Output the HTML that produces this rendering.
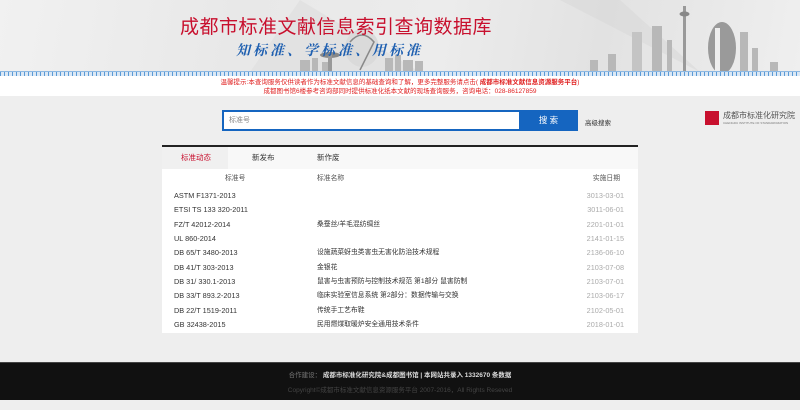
<!DOCTYPE html>
<html><head><meta charset="utf-8"><style>
*{margin:0;padding:0;box-sizing:border-box}
body{width:800px;height:410px;overflow:hidden;background:#eeeeee;font-family:"Liberation Sans","Noto Sans CJK SC",sans-serif;position:relative}
.ab{position:absolute}
.banner{left:0;top:0;width:800px;height:72px;background:linear-gradient(100deg,#f1f1f1 0%,#e8e8e8 30%,#ececec 55%,#e2e2e2 75%,#efefef 100%);overflow:hidden}
.ruler{left:0;top:71px;width:800px;height:5px;background:repeating-linear-gradient(90deg,#5a9ad6 0 1px,#dbe8f5 1px 4px);border-top:1px solid #8db8e2}
.notice{left:0;top:76px;width:800px;height:20px;background:#fff;text-align:center;font-size:6.5px;color:#e02020;line-height:9px;padding-top:2px}
.sbox{left:222px;top:110px;width:356px;height:21px;border:1px solid #1565c0;background:#1565c0}
.sin{position:absolute;left:1px;top:1px;width:295px;height:17px;background:#fff;font-size:7px;color:#888;line-height:17px;padding-left:5px}
.sbtn{position:absolute;left:297px;top:0;width:57px;height:19px;color:#fff;font-size:8.5px;text-align:center;line-height:19px}
.panel{left:162px;top:145px;width:476px;height:188px;background:#fff;border-top:2px solid #222}
.tabs{height:22px;background:#f8f8f8;font-size:7.5px;color:#333;position:relative}
.tabs span{position:absolute;top:6px;line-height:10px}
table{border-collapse:collapse;width:100%;font-size:7.3px;color:#333;table-layout:fixed}
td{height:14.3px;line-height:14px;padding:0;white-space:nowrap;overflow:hidden;vertical-align:middle}
td.c{font-size:6.8px}
.d{color:#aaa;text-align:right;padding-right:14px}
.footer{left:0;top:362px;width:800px;height:38px;background:#111;border-top:1px solid #444;text-align:center;font-size:6.5px}
</style></head><body>
<div class="ab banner">
<svg width="800" height="72" style="position:absolute;left:0;top:0">
<polygon points="300,0 420,72 250,72" fill="#e2e2e2"/>
<polygon points="560,0 700,72 620,0" fill="#d8d8d8" opacity=".6"/>
<g fill="#b8b8b8">
<rect x="300" y="60" width="10" height="12"/><rect x="312" y="58" width="6" height="14"/><rect x="322" y="62" width="8" height="10"/>
<ellipse cx="330" cy="55" rx="10" ry="3" fill="#888"/><rect x="328" y="55" width="4" height="17" fill="#999"/>
<ellipse cx="362" cy="48" rx="17" ry="19" fill="#dadada"/><path d="M350 42 q12 -14 24 0 q-6 12 -14 28" stroke="#888" fill="none" stroke-width="1.5"/>
<rect x="385" y="58" width="8" height="14"/><rect x="395" y="55" width="6" height="17"/><rect x="403" y="60" width="10" height="12"/><rect x="415" y="61" width="8" height="11"/>
<rect x="632" y="32" width="10" height="40" fill="#c4c4c4"/><rect x="652" y="26" width="10" height="46"/><rect x="667" y="40" width="5" height="32"/>
<rect x="683" y="6" width="3" height="66" fill="#999"/><ellipse cx="684.5" cy="14" rx="5" ry="2.5" fill="#888"/>
<ellipse cx="722" cy="48" rx="14" ry="26" fill="#9a9a9a"/><rect x="715" y="28" width="5" height="44" fill="#eee"/>
<rect x="740" y="32" width="8" height="40"/><rect x="752" y="48" width="6" height="24"/><rect x="770" y="62" width="8" height="10"/><rect x="608" y="54" width="8" height="18"/><rect x="590" y="60" width="8" height="12"/>
</g>
</svg>
<div class="ab" style="left:180px;top:12px;font-size:19px;color:#c8102e;letter-spacing:0.5px">成都市标准文献信息索引查询数据库</div>
<div class="ab" style="left:236px;top:40px;font-size:14px;color:#1e5fb0;font-style:italic;font-weight:bold;letter-spacing:3px;font-family:'Noto Serif CJK SC',serif">知标准、学标准、用标准</div>
</div>
<div class="ab ruler"></div>
<div class="ab notice">温馨提示:本查询服务仅供读者作为标准文献信息的基础查询和了解，更多完整服务请点击( <b>成都市标准文献信息资源服务平台</b>)<br>成都图书馆6楼参考咨询部同时提供标准化纸本文献的现场查询服务，咨询电话：028-86127859</div>
<div class="ab sbox"><div class="sin">标准号</div><div class="sbtn">搜 索</div></div>
<div class="ab" style="left:585px;top:117px;font-size:6.5px;color:#333">高级搜索</div>
<div class="ab" style="left:705px;top:111px;width:14px;height:14px;background:#c8102e"></div>
<div class="ab" style="left:723px;top:110px;font-size:8px;color:#555;white-space:nowrap">成都市标准化研究院</div>
<div class="ab" style="left:723px;top:121px;font-size:3px;color:#777;white-space:nowrap">CHENGDU INSTITUTE OF STANDARDIZATION</div>
<div class="ab panel">
<div class="tabs"><div style="position:absolute;left:0;top:0;width:66px;height:22px;background:#f0f0f0"></div><span style="left:19px;color:#c8102e">标准动态</span><span style="left:90px">新发布</span><span style="left:155px">新作废</span></div>
<table>
<colgroup><col style="width:155px"><col><col style="width:90px"></colgroup>
<tr style="height:20px"><td class="c" style="padding-left:63px;color:#555;height:20px">标准号</td><td class="c" style="color:#555">标准名称</td><td class="d c" style="color:#555;padding-right:18px">实施日期</td></tr>
<tr><td style="padding-left:12px">ASTM F1371-2013</td><td></td><td class="d">3013-03-01</td></tr>
<tr><td style="padding-left:12px">ETSI TS 133 320-2011</td><td></td><td class="d">3011-06-01</td></tr>
<tr><td style="padding-left:12px">FZ/T 42012-2014</td><td class="c">桑蚕丝/羊毛混纺绸丝</td><td class="d">2201-01-01</td></tr>
<tr><td style="padding-left:12px">UL 860-2014</td><td></td><td class="d">2141-01-15</td></tr>
<tr><td style="padding-left:12px">DB 65/T 3480-2013</td><td class="c">设施蔬菜蚜虫类害虫无害化防治技术规程</td><td class="d">2136-06-10</td></tr>
<tr><td style="padding-left:12px">DB 41/T 303-2013</td><td class="c">金银花</td><td class="d">2103-07-08</td></tr>
<tr><td style="padding-left:12px">DB 31/ 330.1-2013</td><td class="c">鼠害与虫害预防与控制技术规范 第1部分 鼠害防制</td><td class="d">2103-07-01</td></tr>
<tr><td style="padding-left:12px">DB 33/T 893.2-2013</td><td class="c">临床实验室信息系统 第2部分：数据传输与交换</td><td class="d">2103-06-17</td></tr>
<tr><td style="padding-left:12px">DB 22/T 1519-2011</td><td class="c">传统手工艺布鞋</td><td class="d">2102-05-01</td></tr>
<tr><td style="padding-left:12px">GB 32438-2015</td><td class="c">民用燃煤取暖炉安全通用技术条件</td><td class="d">2018-01-01</td></tr>
</table>
</div>
<div class="ab footer">
<div style="margin-top:6px;color:#777">合作建设： <b style="color:#ddd">成都市标准化研究院&amp;成都图书馆 | 本网站共录入 1332670 条数据</b></div>
<div style="margin-top:5px;color:#444">Copyright©成都市标准文献信息资源服务平台 2007-2016，All Rights Reseved</div>
</div>
</body></html>
